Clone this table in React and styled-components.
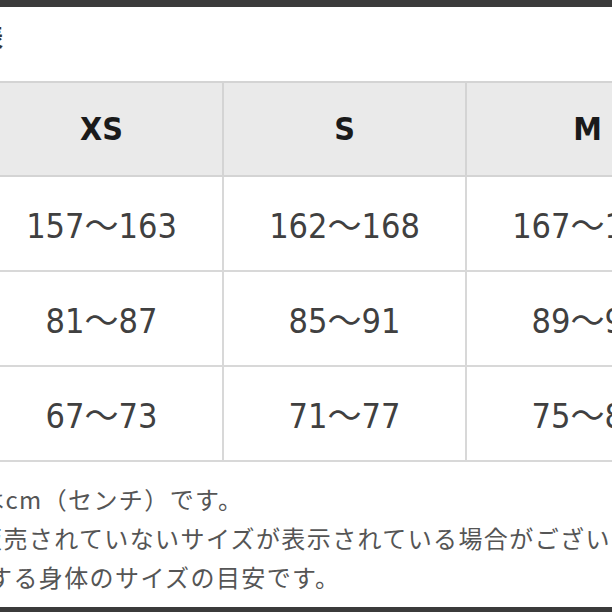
import React from 'react';
import styled, { createGlobalStyle } from 'styled-components';

const GlobalStyle = createGlobalStyle`
  html, body {
    margin: 0;
    padding: 0;
    background: #ffffff;
    overflow: hidden;
  }
`;

const sizes = ['XS', 'S', 'M'];

const rows = [
  ['157～163', '162～168', '167～173'],
  ['81～87', '85～91', '89～95'],
  ['67～73', '71～77', '75～81'],
];

// 左端で切れている行頭の文字を含めて、行ごとにずらす
const notes = [
  { text: 'はcm（センチ）です。', shift: -20 },
  { text: '販売されていないサイズが表示されている場合がございます。', shift: -22 },
  { text: 'する身体のサイズの目安です。', shift: -12 },
];

const App = () => {
  return (
    <>
      <GlobalStyle />
      <Frame>
        <Bar />
        <Heading>
          <Title>サイズ表</Title>
        </Heading>
        <Chart>
          <thead>
            <tr>
              {sizes.map((s) => (
                <HeadCell key={s}>{s}</HeadCell>
              ))}
            </tr>
          </thead>
          <tbody>
            {rows.map((row, i) => (
              <tr key={i}>
                {row.map((v, j) => (
                  <Cell key={j}>{v}</Cell>
                ))}
              </tr>
            ))}
          </tbody>
        </Chart>
        <Notes>
          {notes.map((n, i) => (
            <NoteLine key={i} shift={n.shift}>{n.text}</NoteLine>
          ))}
        </Notes>
        <Bar bottom />
      </Frame>
    </>
  );
};

export default App;

const Frame = styled.div`
  width: 612px;
  height: 612px;
  overflow: hidden;
  display: flex;
  flex-direction: column;
  background: #ffffff;
`;

const Bar = styled.div`
  flex: none;
  height: ${({ bottom }) => (bottom ? '5px' : '7px')};
  margin-top: ${({ bottom }) => (bottom ? 'auto' : '0')};
  background: #3b3b3b;
`;

const Heading = styled.div`
  flex: none;
  height: 74px;
  padding-top: 14px;
  box-sizing: border-box;
  overflow: hidden;
`;

const Title = styled.h1`
  margin: 0 0 0 -92px;
  font-family: "Noto Sans CJK JP", sans-serif;
  font-size: 24px;
  line-height: 30px;
  font-weight: 700;
  color: #333333;
  white-space: nowrap;
`;

const Chart = styled.table`
  flex: none;
  margin-left: -21px;
  width: 731px;
  border-collapse: collapse;
  table-layout: fixed;
`;

const HeadCell = styled.th`
  height: 92px;
  padding: 0;
  background: #eaeaea;
  border: 2px solid #d4d4d4;
  font-family: "DejaVu Sans Condensed", "DejaVu Sans", sans-serif;
  font-stretch: condensed;
  font-size: 32px;
  font-weight: 700;
  color: #1a1a1a;
  text-align: center;
`;

const Cell = styled.td`
  height: 93px;
  padding: 0;
  background: #ffffff;
  border: 2px solid #d8d8d8;
  font-family: "DejaVu Sans Condensed", "DejaVu Sans", "Noto Sans CJK JP", sans-serif;
  font-stretch: condensed;
  font-size: 34px;
  color: #404040;
  text-align: center;
  white-space: nowrap;
`;

const Notes = styled.div`
  padding-top: 17px;
  display: flex;
  flex-direction: column;
`;

const NoteLine = styled.div`
  margin-left: ${({ shift }) => shift}px;
  font-family: "Noto Sans CJK JP", sans-serif;
  font-size: 24px;
  letter-spacing: 1.4px;
  line-height: 39px;
  color: #555555;
  white-space: nowrap;
`;
